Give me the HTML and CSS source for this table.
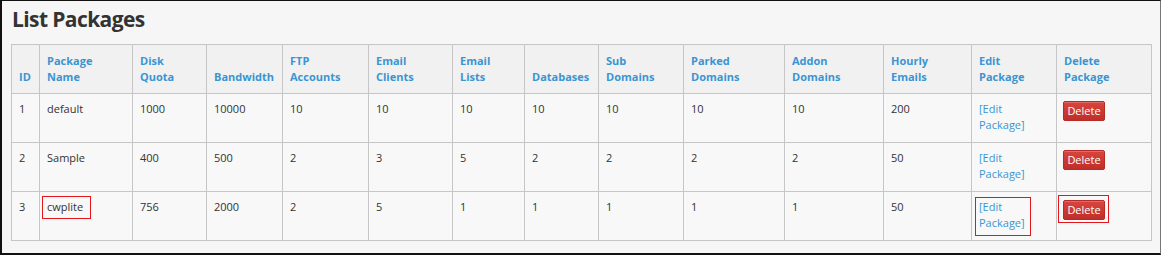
FILE: index.html
```html
<!DOCTYPE html>
<html>
<head>
<meta charset="utf-8">
<link rel="stylesheet" href="styles.css">
</head>
<body>
<div class="frame">
  <h1 class="title">List Packages</h1>
  <table class="packages">
    <colgroup>
      <col class="c-id"><col class="c-name"><col class="c-disk"><col class="c-bw"><col class="c-ftp"><col class="c-ec"><col class="c-el"><col class="c-db"><col class="c-sub"><col class="c-park"><col class="c-addon"><col class="c-hour"><col class="c-edit"><col class="c-del">
    </colgroup>
    <thead>
      <tr>
        <th>ID</th><th>Package<br>Name</th><th>Disk<br>Quota</th><th>Bandwidth</th><th>FTP<br>Accounts</th><th>Email<br>Clients</th><th>Email<br>Lists</th><th>Databases</th><th>Sub<br>Domains</th><th>Parked<br>Domains</th><th>Addon<br>Domains</th><th>Hourly<br>Emails</th><th>Edit<br>Package</th><th>Delete<br>Package</th>
      </tr>
    </thead>
    <tbody>
      <tr>
        <td>1</td><td>default</td><td>1000</td><td>10000</td><td>10</td><td>10</td><td>10</td><td>10</td><td>10</td><td>10</td><td>10</td><td>200</td>
        <td><a class="edit" href="#">[Edit<br>Package]</a></td><td><button class="del">Delete</button></td>
      </tr>
      <tr>
        <td>2</td><td>Sample</td><td>400</td><td>500</td><td>2</td><td>3</td><td>5</td><td>2</td><td>2</td><td>2</td><td>2</td><td>50</td>
        <td><a class="edit" href="#">[Edit<br>Package]</a></td><td><button class="del">Delete</button></td>
      </tr>
      <tr>
        <td>3</td><td><span class="hl hl-name">cwplite</span></td><td>756</td><td>2000</td><td>2</td><td>5</td><td>1</td><td>1</td><td>1</td><td>1</td><td>1</td><td>50</td>
        <td><a class="edit hl hl-edit" href="#">[Edit<br>Package]</a></td><td><div class="del-mark"><button class="del">Delete</button></div></td>
      </tr>
    </tbody>
  </table>
</div>
</body>
</html>
```
FILE: styles.css
```css
html, body {
  margin: 0;
  padding: 0;
}
body {
  width: 1161px;
  height: 255px;
  font-family: "Open Sans", "Liberation Sans", sans-serif;
  color: #333;
  background: #fff;
}
.frame {
  box-sizing: border-box;
  width: 1161px;
  height: 255px;
  border-top: 1px solid #111;
  border-left: 2px solid #111;
  border-bottom: 2px solid #111;
  border-right: 1px solid #777;
  background: #f6f6f6;
  padding: 0 0 0 9px;
}
.title {
  margin: 0;
  padding: 4px 0 0 1px;
  height: 43px;
  box-sizing: border-box;
  font-size: 21px;
  line-height: 28px;
  font-weight: 700;
  color: #333;
  letter-spacing: -0.6px;
}
.packages {
  border-collapse: collapse;
  table-layout: fixed;
  width: 1141px;
  font-size: 11px;
  line-height: 16px;
}
.packages th, .packages td {
  border: 1px solid #c6c6c6;
  text-align: left;
  vertical-align: top;
}
.packages th {
  padding: 8px 7px;
  vertical-align: bottom;
  background: #f1f1f1;
  color: #3a95d2;
  font-weight: 700;
}
.packages td {
  padding: 7px 7px 9px 7px;
  background: #f8f8f8;
  height: 32px;
}
.c-id { width: 28px; }
.c-name { width: 93px; }
.c-disk { width: 74px; }
.c-bw { width: 76px; }
.c-ftp { width: 86px; }
.c-ec { width: 84px; }
.c-el { width: 72px; }
.c-db { width: 74px; }
.c-sub { width: 85px; }
.c-park { width: 101px; }
.c-addon { width: 99px; }
.c-hour { width: 88px; }
.c-edit { width: 85px; }
.c-del { width: 95px; }
.edit {
  color: #3a95d2;
  text-decoration: none;
}
.del {
  display: block;
  margin: 0 0 0 -1px;
  width: 42px;
  height: 20px;
  padding: 0;
  border: 1px solid #b52b27;
  border-radius: 2px;
  background: linear-gradient(#d9443e, #bf2f2a);
  color: #fff;
  font-family: "Open Sans", "Liberation Sans", sans-serif;
  font-size: 11px;
  line-height: 18px;
  text-align: center;
  box-shadow: inset 0 1px 0 rgba(255,255,255,0.2);
}
.del-mark {
  box-sizing: border-box;
  width: 51px;
  height: 28px;
  margin: -4px 0 0 -6px;
  padding: 4px 0 0 5px;
  border: 1px solid #e4151b;
}
.hl {
  position: relative;
}
.hl::after {
  content: "";
  position: absolute;
  border: 1px solid #e4151b;
  pointer-events: none;
}
.hl-name::after {
  inset: -3px -8px -5px -5px;
}
.hl-edit {
  display: inline-block;
}
.hl-edit::after {
  inset: -2px -6px -5px -4px;
}
```
